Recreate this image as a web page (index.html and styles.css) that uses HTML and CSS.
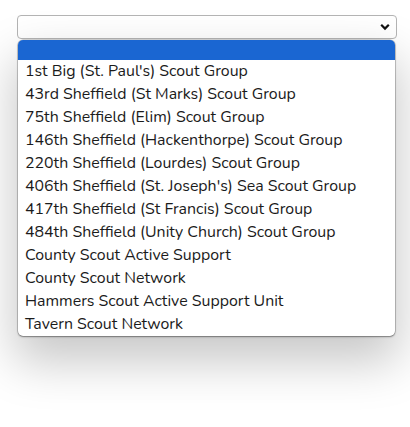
FILE: index.html
```html
<!DOCTYPE html>
<html>
<head>
<meta charset="utf-8">
<link rel="stylesheet" href="styles.css">
</head>
<body>
<div class="wrap">
  <div class="select">
    <svg class="chev" width="10" height="8" viewBox="0 0 10 8"><path d="M1.2 1.8 L5 5.6 L8.8 1.8" fill="none" stroke="#111" stroke-width="2.2"/></svg>
  </div>
  <div class="list">
    <div class="opt sel"></div>
    <div class="opt">1st Big (St. Paul's) Scout Group</div>
    <div class="opt">43rd Sheffield (St Marks) Scout Group</div>
    <div class="opt">75th Sheffield (Elim) Scout Group</div>
    <div class="opt">146th Sheffield (Hackenthorpe) Scout Group</div>
    <div class="opt">220th Sheffield (Lourdes) Scout Group</div>
    <div class="opt">406th Sheffield (St. Joseph's) Sea Scout Group</div>
    <div class="opt">417th Sheffield (St Francis) Scout Group</div>
    <div class="opt">484th Sheffield (Unity Church) Scout Group</div>
    <div class="opt">County Scout Active Support</div>
    <div class="opt">County Scout Network</div>
    <div class="opt">Hammers Scout Active Support Unit</div>
    <div class="opt">Tavern Scout Network</div>
  </div>
</div>
</body>
</html>
```
FILE: styles.css
```css
html, body { margin: 0; padding: 0; background: #fff; }
body { font-family: "Nunito", "Lato", "Open Sans", sans-serif; min-height: 427px; }
.wrap { padding: 15px 14px 0 17px; display: flex; flex-direction: column; }
.select {
  height: 22px;
  border: 1px solid #b4b4b4;
  border-radius: 4px;
  background: #fff;
  display: flex;
  align-items: center;
  justify-content: flex-end;
  padding-right: 6px;
  width: 372px;
}
.chev { display: block; }
.list {
  margin: 1px 0 0 1px;
  width: 377px;
  border-radius: 5px;
  background: #fff;
  box-shadow: 0 22px 48px 4px rgba(0,0,0,0.22), 0 1px 2px rgba(0,0,0,0.35), 0 0 0 0.5px rgba(0,0,0,0.3);
  overflow: hidden;
}
.opt {
  height: 23px;
  line-height: 23px;
  padding-left: 7px;
  font-size: 15.9px;
  color: #1b1b1b;
  white-space: nowrap;
}
.opt.sel { height: 20px; background: #1a66d2; }
```
